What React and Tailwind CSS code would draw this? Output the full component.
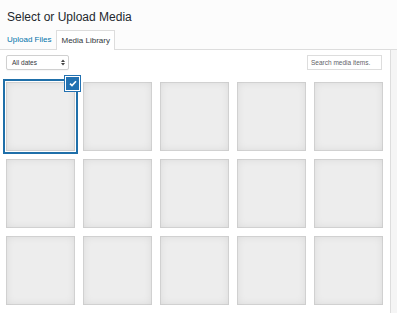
import React from "react";

function Tile({ selected }) {
  return (
    <div className="relative h-[69px] w-[69px] bg-[#ededed] shadow-[inset_0_0_9px_rgba(0,0,0,0.09),inset_0_0_0_1px_rgba(0,0,0,0.08)]">
      {selected && (
        <>
          <div className="pointer-events-none absolute -inset-[3px] border-2 border-[#1f6fa9]">
            <div className="h-full w-full border border-white" />
          </div>
          <div className="absolute -right-[4px] -top-[5px] flex h-[13px] w-[13px] items-center justify-center bg-[#2271b1] shadow-[0_0_0_1px_#fff,0_0_0_2px_#2271b1]">
            <svg width="8" height="7" viewBox="0 0 8 7">
              <path d="M1 3.6 L3 5.6 L7 1.2" fill="none" stroke="#fff" strokeWidth="1.6" />
            </svg>
          </div>
        </>
      )}
    </div>
  );
}

export default function App() {
  const tiles = Array.from({ length: 20 });
  return (
    <div
      className="relative flex h-[313px] w-[397px] flex-col overflow-hidden bg-white"
      style={{ fontFamily: '"Liberation Sans", Arial, sans-serif' }}
    >
      <div className="flex h-[50px] shrink-0 flex-col border-b border-[#dddddd] bg-[#fcfcfc]">
        <h1 className="pl-[7px] pt-[10px] text-[12px] leading-[14px] font-normal text-[#23282d]">
          Select or Upload Media
        </h1>
        <div className="-mb-px mt-auto flex items-end pl-[7px]">
          <span className="mr-[5px] flex h-[20px] items-center text-[8px] text-[#0073aa]">
            Upload Files
          </span>
          <span className="flex h-[20px] items-center border border-b-0 border-[#dddddd] bg-white px-[4px] text-[8px] text-[#32373c]">
            Media Library
          </span>
        </div>
      </div>
      <div className="flex min-h-0 flex-1">
        <div className="w-[390px] shrink-0">
          <div className="flex items-center justify-between pl-[6px] pr-[8px] pt-[5px]">
            <div className="flex h-[15px] w-[63px] items-center justify-between rounded-[2px] border border-[#d0d0d0] bg-white pl-[5px] pr-[3px] text-[6.5px] text-[#32373c] shadow-[0_1px_1px_rgba(0,0,0,0.04)]">
              <span>All dates</span>
              <svg width="4" height="7" viewBox="0 0 4 7">
                <path d="M0 3 L2 0.5 L4 3 Z M0 4 L2 6.5 L4 4 Z" fill="#444" />
              </svg>
            </div>
            <div className="flex h-[15px] w-[75px] items-center border border-[#dddddd] bg-white pl-[3px] text-[6.5px] text-[#5f6368]">
              Search media items.
            </div>
          </div>
          <div className="mt-[12px] grid grid-cols-[repeat(5,69px)] gap-[8px] pl-[6px]">
            {tiles.map((_, i) => (
              <Tile key={i} selected={i === 0} />
            ))}
          </div>
        </div>
        <div className="flex-1 border-l border-[#dddddd] bg-[#f5f5f5]" />
      </div>
    </div>
  );
}
